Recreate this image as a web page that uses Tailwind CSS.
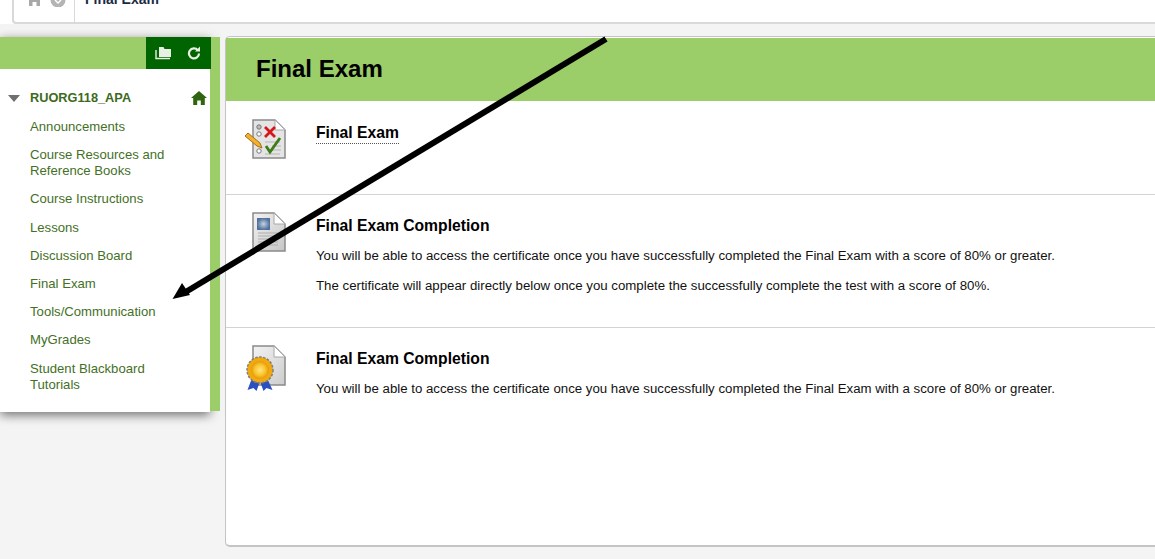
<!DOCTYPE html>
<html lang="en">
<head>
  <meta charset="UTF-8">
  <title>Final Exam</title>
  <script src="https://cdn.jsdelivr.net/npm/@tailwindcss/browser@4"></script>
</head>
<body class="bg-[#f4f4f4] font-['Liberation_Sans',Arial,sans-serif] text-black">
  <div class="relative h-[559px] w-[1155px] overflow-hidden">

    <!-- breadcrumb bar, cut off by the top of the window -->
    <div class="bg-white h-[24px]">
      <div class="ml-[12px] h-[24px] flex items-end bg-white border-l-2 border-b-2 border-[#d9d9d9] rounded-bl-[4px]">
        <div class="w-[61px] h-[22px] flex items-start gap-[8px] pl-[13px] border-r border-[#d9d9d9]">
          <svg class="w-[15px] h-[6px]" viewBox="0 0 15 6"><path d="M2 0h11v6H9.500V2h-4v4H2z" fill="#a8a8a8"/></svg>
          <svg class="w-[16px] h-[7px]" viewBox="0 0 16 7"><path d="M.500 0h15a7.500 7.500 0 0 1-15 0z" fill="#b4b4b4"/><path d="M5 0l3 3 3-3" fill="none" stroke="#fff" stroke-width="1.500"/></svg>
        </div>
        <div class="self-start ml-[10px] -mt-[8px] text-[14px] leading-[15px] font-bold text-[#1b2a44]">Final Exam</div>
      </div>
    </div>

    <div class="flex items-start mt-[13px]">
      <!-- course menu -->
      <div class="w-[220px] shrink-0 flex items-start">
        <div class="w-[210px] shadow-[0_3px_10px_rgba(0,0,0,0.55)]">
          <div class="h-[32px] bg-[#9bcd68] flex justify-end">
            <div class="relative z-10 w-[65px] -mr-px bg-[#006400] flex items-center justify-between px-[9px]">
              <svg class="w-[16px] h-[14px]" viewBox="0 0 16 14"><path d="M4 1h4.500l1 2H16v8H4z" fill="#e8f0e4"/><path d="M1 4v8.500h14" fill="none" stroke="#e8f0e4" stroke-width="1.400"/></svg>
              <svg class="w-[14px] h-[14px] mr-px" viewBox="0 0 14 14"><path d="M10.800 4.200A5 5 0 1 0 12 7.500" fill="none" stroke="#e8f0e4" stroke-width="2.200"/><path d="M8 5.500h5V.500z" fill="#e8f0e4"/></svg>
            </div>
          </div>
          <div class="h-[343px] bg-white pt-[20px]">
            <div class="flex items-center h-[18px] pl-[8px] pr-[3px]">
              <div class="w-0 h-0 border-x-[6px] border-x-transparent border-t-[7px] border-t-[#6f6f6f]"></div>
              <div class="ml-[10px] text-[12.75px] font-bold text-[#3c6a1c]">RUORG118_APA</div>
              <svg class="ml-auto w-[16px] h-[14px] -mt-px" viewBox="0 0 16 14"><path d="M8 0l8 7h-2.200v7H9.800V9.500H6.200V14H2.200V7H0z" fill="#2f6410"/></svg>
            </div>
            <ul class="mt-[12px] pl-[30px] pr-[30px] flex flex-col gap-[12.2px] text-[13.15px] leading-[16px] text-[#44701f]">
              <li>Announcements</li>
              <li>Course Resources and Reference Books</li>
              <li>Course Instructions</li>
              <li>Lessons</li>
              <li>Discussion Board</li>
              <li>Final Exam</li>
              <li>Tools/Communication</li>
              <li>MyGrades</li>
              <li>Student Blackboard Tutorials</li>
            </ul>
          </div>
        </div>
        <div class="w-[10px] h-[374px] bg-[#9bcd68]"></div>
      </div>

      <!-- content panel -->
      <div class="ml-[5px] -mt-[1px] w-[935px] h-[511px] shrink-0 bg-white border-l border-t border-b-2 border-[#c4c4c4] rounded-l-[5px] pt-[1px]">
        <div class="h-[63px] bg-[#9bcd68] flex items-center pl-[30px] pb-[2px] text-[24px] font-bold">Final Exam</div>

        <div class="h-[94px] flex border-b border-[#d4d4d4]">
          <div class="w-[90px] pl-[18px] pt-[18px]">
            <svg class="w-[42px] h-[42px]" viewBox="0 0 42 42">
              <path d="M9 1h22l10 10v28H9z" fill="#e4e4e4" stroke="#8a8a8a" stroke-width="1.500"/>
              <path d="M31 1v10h10z" fill="#fff" stroke="#a8a8a8"/>
              <circle cx="15" cy="8" r="2.200" fill="#bbb" stroke="#777"/><circle cx="15" cy="15" r="2.200" fill="#fff" stroke="#777"/><circle cx="15" cy="32" r="2.200" fill="#fff" stroke="#777"/>
              <path d="M21 8l10 10M31 8L21 18" stroke="#d8151b" stroke-width="2.800"/>
              <path d="M21 23h15M28 27h9M28 31h9M21 35h15" stroke="#b5b5b5"/>
              <path d="M22 27l4 6 10-14" fill="none" stroke="#3c7d16" stroke-width="2.800"/>
              <path d="M1 17l3-3 12 10 2 5-5-2z" fill="#f0b030" stroke="#a86d10"/>
            </svg>
          </div>
          <div class="pt-[22px]">
            <span class="block text-[15.7px] leading-[19px] font-bold border-b border-dotted border-[#555] pb-[1px]">Final Exam</span>
          </div>
        </div>

        <div class="h-[133px] flex border-b border-[#d4d4d4]">
          <div class="w-[90px] pl-[26px] pt-[17px]">
            <svg class="w-[34px] h-[40px]" viewBox="0 0 34 40">
              <defs>
                <linearGradient id="sheet" x1="0" y1="0" x2="1" y2="1"><stop offset="0" stop-color="#f2f2f2"/><stop offset="1" stop-color="#c6c6c6"/></linearGradient>
                <radialGradient id="photo"><stop offset="0" stop-color="#c4d2e2"/><stop offset="1" stop-color="#4f6f9c"/></radialGradient>
              </defs>
              <path d="M1 1h21l11 11v27H1z" fill="url(#sheet)" stroke="#8a8a8a" stroke-width="1.500"/>
              <path d="M22 1v11h11z" fill="#fff" stroke="#a8a8a8"/>
              <rect x="5" y="6" width="13" height="12" fill="url(#photo)"/>
              <path d="M6 21h20M6 24h20M6 27h20M6 30h20M6 33h20" stroke="#adadad"/>
            </svg>
          </div>
          <div class="pt-[21px]">
            <h3 class="text-[15.7px] leading-[19px] font-bold">Final Exam Completion</h3>
            <p class="mt-[13px] text-[13.25px] leading-[16px] text-[#111]">You will be able to access the certificate once you have successfully completed the Final Exam with a score of 80% or greater.</p>
            <p class="mt-[14px] text-[13.25px] leading-[16px] text-[#111]">The certificate will appear directly below once you complete the successfully complete the test with a score of 80%.</p>
          </div>
        </div>

        <div class="flex">
          <div class="w-[90px] pl-[20px] pt-[17px]">
            <svg class="w-[40px] h-[46px]" viewBox="0 0 40 46">
              <defs>
                <linearGradient id="sheet2" x1="0" y1="0" x2="1" y2="1"><stop offset="0" stop-color="#f2f2f2"/><stop offset="1" stop-color="#cdcdcd"/></linearGradient>
                <radialGradient id="seal"><stop offset="0" stop-color="#ffe680"/><stop offset="0.6" stop-color="#f8c52c"/><stop offset="1" stop-color="#e8950c"/></radialGradient>
              </defs>
              <path d="M7 1h21l11 11v28H7z" fill="url(#sheet2)" stroke="#8a8a8a" stroke-width="1.500"/>
              <path d="M28 1v11h11z" fill="#fff" stroke="#a8a8a8"/>
              <path d="M6 33L1.500 45l6-2 3 3 4-11zM21 33l5.500 12-6-2-3 3-4-11z" fill="#2a4fc0"/>
              <circle cx="14" cy="25" r="13" fill="#f0a90f" stroke="#7f7f7f" stroke-width="1.500" stroke-dasharray="2.500 1.500"/>
              <circle cx="14" cy="25" r="9" fill="url(#seal)"/>
            </svg>
          </div>
          <div class="pt-[21px]">
            <h3 class="text-[15.7px] leading-[19px] font-bold">Final Exam Completion</h3>
            <p class="mt-[13px] text-[13.25px] leading-[16px] text-[#111]">You will be able to access the certificate once you have successfully completed the Final Exam with a score of 80% or greater.</p>
          </div>
        </div>
      </div>
    </div>

    <!-- annotation arrow drawn over the page -->
    <svg class="absolute left-0 top-0 pointer-events-none" width="1155" height="559" viewBox="0 0 1155 559">
      <path d="M606 39L184 293" stroke="#000" stroke-width="6" fill="none"/>
      <path d="M172.500 299L182 283 190 295z" fill="#000"/>
    </svg>
  </div>
</body>
</html>
